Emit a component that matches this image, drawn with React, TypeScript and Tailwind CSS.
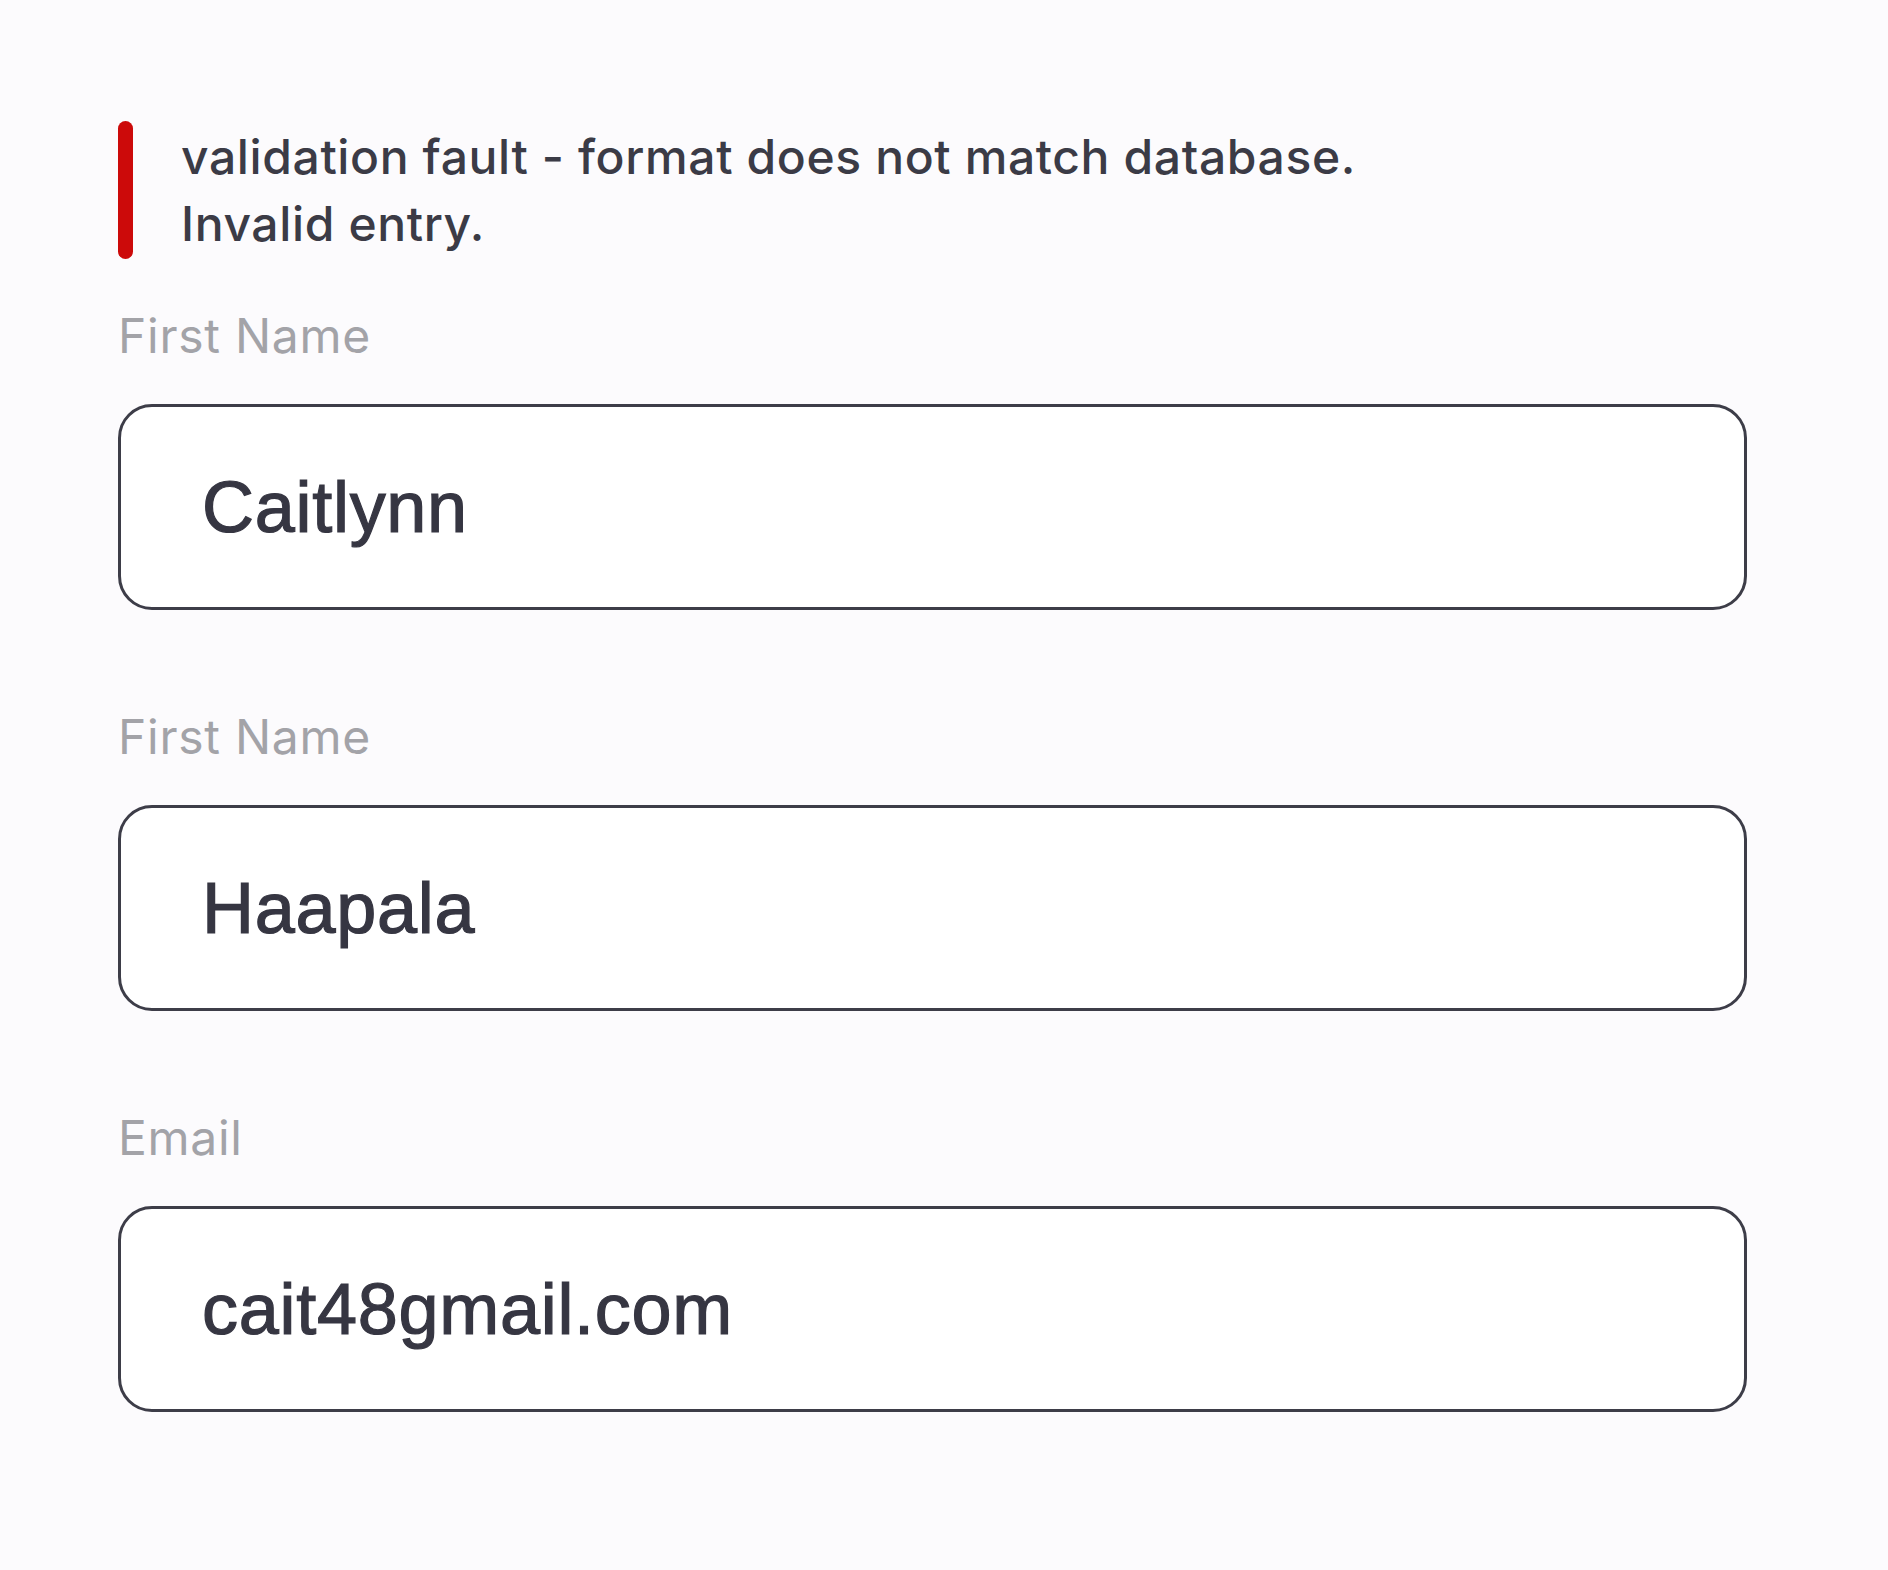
const fields = [
  { label: "First Name", value: "Caitlynn" },
  { label: "First Name", value: "Haapala" },
  { label: "Email", value: "cait48gmail.com" },
];

const Field = ({ label, value }: { label: string; value: string }) => (
  <div className="flex flex-col">
    <label className="h-[53px] font-['Inter'] text-[48px] leading-[53px] tracking-[0.015em] text-[#a3a3a8]">
      {label}
    </label>
    <div className="mt-[42px] flex h-[206px] items-center rounded-[34px] border-[3px] border-[#3d3d48] bg-white pl-[81px]">
      <span className="font-['Liberation_Sans'] text-[72px] leading-none tracking-[0.01em] text-[#363642] [-webkit-text-stroke:1.2px_#363642]">
        {value}
      </span>
    </div>
  </div>
);

export default function App() {
  return (
    <div className="min-h-screen bg-[#fcfbfd] pb-[150px] pl-[118px] pr-[141px] pt-[121px] font-['Inter',sans-serif]">
      <div className="flex items-center gap-[48px]">
        <div className="h-[138px] w-[15px] rounded-full bg-[#cc0a0a]" />
        <p className="text-[48px] font-medium leading-[67px] tracking-[0.013em] text-[#3b3b46]">
          validation fault - format does not match database.
          <br />
          Invalid entry.
        </p>
      </div>

      <div className="mt-[50px] flex flex-col gap-[100px]">
        {fields.map((f, i) => (
          <Field key={i} label={f.label} value={f.value} />
        ))}
      </div>
    </div>
  );
}
